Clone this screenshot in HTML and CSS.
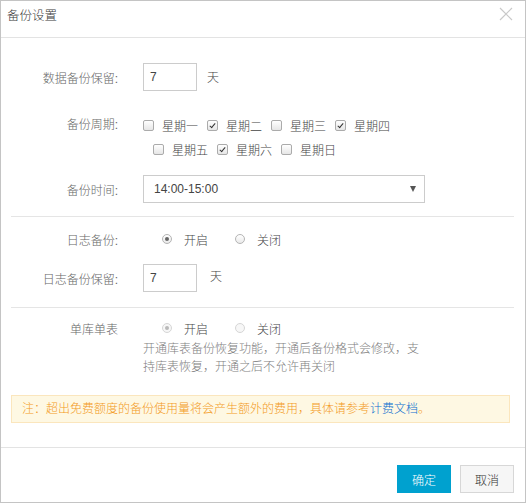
FILE: index.html
```html
<!DOCTYPE html>
<html lang="zh-CN">
<head>
<meta charset="utf-8">
<title>备份设置</title>
<link rel="stylesheet" href="styles.css">
</head>
<body>
<div class="dialog">
  <div class="header">
    <div class="title">备份设置</div>
    <svg class="close" width="14" height="14" viewBox="0 0 14 14"><path d="M1 1L13 13M13 1L1 13" stroke="#c9c9c9" stroke-width="1.2" fill="none"/></svg>
  </div>
  <div class="body">
    <div class="row row-keep">
      <div class="label">数据备份保留:</div>
      <div class="input">7</div>
      <span class="unit">天</span>
    </div>

    <div class="row row-cycle">
      <div class="label">备份周期:</div>
      <div class="days">
        <div class="days-line">
          <span class="cb"><i class="box"></i>星期一</span>
          <span class="cb"><i class="box checked"></i>星期二</span>
          <span class="cb"><i class="box"></i>星期三</span>
          <span class="cb"><i class="box checked"></i>星期四</span>
        </div>
        <div class="days-line second">
          <span class="cb"><i class="box"></i>星期五</span>
          <span class="cb"><i class="box checked"></i>星期六</span>
          <span class="cb"><i class="box"></i>星期日</span>
        </div>
      </div>
    </div>

    <div class="row row-time">
      <div class="label">备份时间:</div>
      <div class="select"><span>14:00-15:00</span><span class="arrow"></span></div>
    </div>

    <div class="sep sep1"></div>

    <div class="row row-log">
      <div class="label">日志备份:</div>
      <div class="radios">
        <span class="rd"><i class="dot on"></i>开启</span>
        <span class="rd"><i class="dot"></i>关闭</span>
      </div>
    </div>

    <div class="row row-logkeep">
      <div class="label">日志备份保留:</div>
      <div class="input">7</div>
      <span class="unit unit2">天</span>
    </div>

    <div class="sep sep2"></div>

    <div class="row row-single">
      <div class="label">单库单表</div>
      <div class="radios disabled">
        <span class="rd"><i class="dot on"></i>开启</span>
        <span class="rd"><i class="dot"></i>关闭</span>
      </div>
    </div>
    <div class="desc">开通库表备份恢复功能，开通后备份格式会修改，支持库表恢复，开通之后不允许再关闭</div>

    <div class="notice">注：超出免费额度的备份使用量将会产生额外的费用，具体请参考<a class="link">计费文档</a>。</div>
  </div>
  <div class="footer">
    <button class="btn primary">确定</button>
    <button class="btn">取消</button>
  </div>
</div>
</body>
</html>
```

FILE: styles.css
```css
* { box-sizing: border-box; }
html, body { margin: 0; padding: 0; background: #fff; }
body {
  font-family: "Liberation Sans", "Noto Sans CJK SC", sans-serif;
  font-size: 12px;
  font-weight: 300;
  color: #444;
}
.dialog {
  width: 526px;
  height: 503px;
  border: 1px solid #c4c4c4;
  display: flex;
  flex-direction: column;
  background: #fff;
}
.header {
  height: 37px;
  border-bottom: 1px solid #e3e3e3;
  display: flex;
  justify-content: space-between;
  align-items: flex-start;
  padding: 6px 12px 0 6px;
}
.title {
  font-size: 12.5px;
  line-height: 18px;
  color: #3a3a3a;
}

.body { flex: 1; }
.row { display: flex; align-items: center; }
.label {
  width: 117px;
  margin-right: 25px;
  text-align: right;
  color: #666;
  flex-shrink: 0;
}
.row-keep { margin-top: 25px; height: 28px; }
.input {
  width: 54px;
  height: 28px;
  border: 1px solid #ccc;
  padding-left: 6px;
  line-height: 26px;
  color: #444;
}
.unit { margin-left: 10px; margin-top: -2px; color: #444; }
.unit2 { margin-left: 13px; margin-top: -6px; }

.row-cycle { margin-top: 22px; align-items: flex-start; }
.row-cycle .label { line-height: 24px; }
.days-line { display: flex; height: 24px; align-items: center; }
.days-line.second { padding-left: 10px; }
.cb { display: flex; align-items: center; margin-right: 9px; color: #444; }
.box {
  width: 11px;
  height: 11px;
  border: 1px solid #ababab;
  border-radius: 2px;
  background: linear-gradient(#fff, #e6e6e6);
  margin-right: 8px;
  position: relative;
}
.box.checked::after {
  content: "";
  position: absolute;
  left: 3px;
  top: 1px;
  width: 2px;
  height: 5px;
  border-right: 1.6px solid #333;
  border-bottom: 1.6px solid #333;
  transform: rotate(40deg);
}

.row-time { margin-top: 14px; }
.select {
  width: 282px;
  height: 28px;
  border: 1px solid #ccc;
  display: flex;
  align-items: center;
  justify-content: space-between;
  padding: 0 8px 0 10px;
  color: #444;
}
.arrow {
  width: 0;
  height: 0;
  border-left: 3px solid transparent;
  border-right: 3px solid transparent;
  border-top: 6px solid #555;
}

.sep { height: 1px; background: #e5e5e5; margin-left: 10px; margin-right: 11px; }
.sep1 { margin-top: 13px; }
.sep2 { margin-top: 15px; }

.row-log { margin-top: 12px; height: 20px; }
.radios { display: flex; align-items: center; padding-left: 19px; }
.rd { display: flex; align-items: center; margin-right: 27px; color: #444; }
.dot {
  width: 10px;
  height: 10px;
  border-radius: 50%;
  border: 1px solid #b4b4b4;
  background: linear-gradient(#fff, #eaeaea);
  margin-right: 12px;
  position: relative;
}
.dot.on::after {
  content: "";
  position: absolute;
  left: 2px;
  top: 2px;
  width: 4px;
  height: 4px;
  border-radius: 50%;
  background: #666;
}
.radios.disabled .dot { border-color: #d6d6d6; background: #f7f7f7; }
.radios.disabled .dot.on::after { background: #b9b9b9; }

.row-logkeep { margin-top: 15px; height: 28px; }

.row-single { margin-top: 10px; height: 20px; }
.desc {
  margin-left: 142px;
  width: 282px;
  margin-top: 2px;
  line-height: 18px;
  color: #808080;
}
.notice {
  margin: 19px 0 0 10px;
  width: 499px;
  height: 28px;
  border: 1px solid #fbe6bd;
  background: #fef8e3;
  padding-left: 10px;
  line-height: 26px;
  color: #f39a1c;
}
.link { color: #0a6fcf; text-decoration: none; }

.footer {
  height: 55px;
  border-top: 1px solid #e3e3e3;
  display: flex;
  justify-content: flex-end;
  align-items: flex-start;
  padding: 17px 11px 0 0;
  gap: 9px;
}
.btn {
  width: 54px;
  height: 28px;
  border: 1px solid #d7d7d7;
  background: #f6f6f6;
  color: #333;
  font: inherit;
  font-size: 12px;
  padding: 0;
}
.btn.primary {
  background: #00a1cf;
  border-color: #00a1cf;
  color: #fff;
}
```
